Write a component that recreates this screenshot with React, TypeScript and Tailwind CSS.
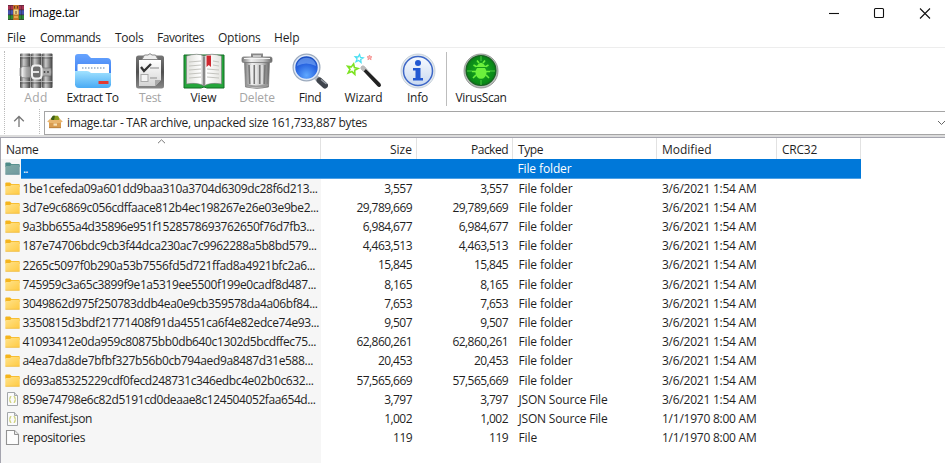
import { useLayoutEffect, useRef, useState, type ReactNode } from "react";

/* Text whose tracking is computed so that it fills the given advance width. */
function Fit({ w, children }: { w: number; children: string }) {
  const ref = useRef<HTMLSpanElement>(null);
  const [spacing, setSpacing] = useState(0);
  useLayoutEffect(() => {
    const el = ref.current;
    if (!el) return;
    el.style.letterSpacing = "0px";
    setSpacing((w - el.getBoundingClientRect().width) / children.length);
    el.style.letterSpacing = "";
  }, [w, children]);
  return (
    <span ref={ref} className="inline-block whitespace-nowrap" style={{ letterSpacing: spacing + "px" }}>
      {children}
    </span>
  );
}

function AddIcon() {
  return (
    <svg width="34" height="36" viewBox="0 0 34 36">
      <defs>
        <linearGradient id="bk">
          <stop offset="0" stopColor="#4c4c4c" />
          <stop offset=".35" stopColor="#c9c9c9" />
          <stop offset=".6" stopColor="#999" />
          <stop offset="1" stopColor="#3c3c3c" />
        </linearGradient>
        <linearGradient id="strap">
          <stop offset="0" stopColor="#777" />
          <stop offset=".2" stopColor="#eee" />
          <stop offset=".6" stopColor="#aaa" />
          <stop offset="1" stopColor="#8a8a8a" />
        </linearGradient>
      </defs>
      {[1, 12, 23].map((x) => (
        <g key={x}>
          <rect x={x} y="0.500" width="10.500" height="34.500" rx="1" fill="url(#bk)" />
          <path d={`M${x} 5h10.500M${x} 30h10.500`} stroke="#444" strokeWidth="1.200" opacity=".6" />
          <path d={`M${x} 3.500h10.500M${x} 28.500h10.500`} stroke="#ddd" strokeWidth="1" opacity=".6" />
        </g>
      ))}
      <path d="M1 15Q4 12.500 8 13.500L12 14V24L7 25Q3 25 1 23Z" fill="url(#strap)" stroke="#777" strokeWidth=".6" />
      <path d="M22 15H32Q33 19 32 23H22Z" fill="#aaa" stroke="#666" strokeWidth=".6" />
      <rect x="13" y="12.500" width="9.500" height="13" rx="3" fill="#6e6e6e" stroke="#f0f0f0" strokeWidth="2" />
      <path d="M12 19h8" stroke="#f0f0f0" strokeWidth="1.800" />
      <circle cx="25.500" cy="19" r=".9" fill="#444" />
      <circle cx="29" cy="19" r=".9" fill="#444" />
    </svg>
  );
}

function AppIcon() {
  return (
    <svg width="16" height="15" viewBox="0 0 16 15">
      <rect width="16" height="5" y="0" fill="#a83252" />
      <rect width="16" height="5" y="5" fill="#4353ad" />
      <rect width="16" height="5" y="10" fill="#2e8a35" />
      <path d="M0 .4h16M0 4.800h16M0 9.800h16M0 14.600h16" stroke="#3b2430" strokeWidth=".8" opacity=".75" />
      <path d="M2.500 1v13M13.500 1v13" stroke="#222" strokeWidth="1" opacity=".35" />
      <rect x="5.200" width="5.600" height="15" fill="#c87525" />
      <rect x="5.600" y="4.500" width="4.800" height="5" fill="#ecd58d" />
      <path d="M6.500 1v2.500M9.500 1v2.500M8 6v3" stroke="#674024" strokeWidth="1" />
      <path d="M6 12h4" stroke="#e7a54b" strokeWidth="2" />
    </svg>
  );
}

function ExtractIcon() {
  return (
    <svg width="38" height="36" viewBox="0 0 38 36">
      <defs>
        <linearGradient id="fb" x2="0" y2="1"><stop stopColor="#67a4ff" /><stop offset="1" stopColor="#276be8" /></linearGradient>
        <linearGradient id="ff" x2="0" y2="1"><stop stopColor="#a2e2ff" /><stop offset="1" stopColor="#48aaf4" /></linearGradient>
      </defs>
      <path d="M1 32V4Q1 1 4 1H12Q14 1 15 3L17 5H33Q37 5 37 9V32Z" fill="url(#fb)" />
      <rect x="3.500" y="11" width="31.500" height="18" rx="1" fill="#fff" />
      <path d="M8 15h24" stroke="#96abc2" strokeWidth="1.500" strokeDasharray="1.500 1.500" />
      <path d="M1 18H13Q15 18 17 20H37V31Q37 35 33 35H5Q1 35 1 31Z" fill="url(#ff)" />
      <rect x="24.500" y="28" width="10" height="3" rx=".5" fill="#e23a32" />
    </svg>
  );
}

function TestIcon() {
  return (
    <svg width="30" height="36" viewBox="0 0 30 36">
      <defs>
        <linearGradient id="cp" x2="0" y2="1"><stop stopColor="#777" /><stop offset=".5" stopColor="#505050" /><stop offset="1" stopColor="#888" /></linearGradient>
        <linearGradient id="paper" x2="0" y2="1"><stop stopColor="#fff" /><stop offset="1" stopColor="#d5d5d5" /></linearGradient>
      </defs>
      <rect x="1" y="2.500" width="28" height="33" rx="2.500" fill="url(#cp)" />
      <path d="M4 7H26V27L20 33H4Z" fill="url(#paper)" />
      <path d="M20 33V27H26Z" fill="#aaa" />
      <path d="M7 6.500L9.500 2H13Q15-.7 17 2h3.500L23 6.500Z" fill="#eee" stroke="#888" />
      <path d="M15 15h9M15 25h7" stroke="#aaa" strokeWidth="1.500" />
      <path d="M6 14l3 4 7-7" fill="none" stroke="#333" strokeWidth="2.300" />
      <rect x="6" y="21.500" width="7" height="7" fill="#f4f4f4" stroke="#aaa" />
    </svg>
  );
}

function ViewIcon() {
  return (
    <svg width="42" height="36" viewBox="0 0 42 36">
      <defs><linearGradient id="pg"><stop stopColor="#deded9" /><stop offset=".4" stopColor="#fff" /><stop offset=".5" stopColor="#999" /><stop offset=".57" stopColor="#fff" /><stop offset="1" stopColor="#e3e3de" /></linearGradient></defs>
      <path d="M1 2H41V35H24Q21 33 18 35H1Z" fill="#24a63b" stroke="#126d25" />
      <path d="M3.500 3Q15-.5 21 3Q28-.5 38.500 3V31Q27 29 21 33Q15 29 3.500 31Z" fill="url(#pg)" stroke="#777" strokeWidth=".6" />
      <path d="M21 4v28" stroke="#666" />
      <path d="M6 9l12-1M6 13l12-1M6 17l12-1M6 21l12-1M6 25l12-1M24 16l12 1M24 20l12 1M24 24l12 1M30 8l6 1M30 12l6 1" stroke="#c4c4bf" strokeWidth="1" />
      <path d="M23.500 2.500H28V14L25.750 12 23.500 14Z" fill="#ce2830" />
    </svg>
  );
}

function DeleteIcon() {
  return (
    <svg width="32" height="36" viewBox="0 0 32 36">
      <defs><linearGradient id="bin"><stop stopColor="#777" /><stop offset=".3" stopColor="#f0f0f0" /><stop offset=".7" stopColor="#c6c6c6" /><stop offset="1" stopColor="#666" /></linearGradient></defs>
      <path d="M11 4V1.500H21V4" fill="none" stroke="#888" strokeWidth="2" />
      <path d="M3.500 9H28.500L27.500 34Q16 37 4.500 34Z" fill="url(#bin)" stroke="#777" strokeWidth=".7" />
      <path d="M8 12l.7 19M13.300 12v19M18.700 12v19M24 12l-.7 19" stroke="#777" strokeWidth="1.600" />
      <path d="M10 12l.7 19M15 12v19M21 12v19" stroke="#eee" strokeWidth="1.100" />
      <rect x="1" y="4" width="30" height="5.500" rx="1.500" fill="url(#bin)" stroke="#777" strokeWidth=".8" />
      <path d="M3 5.500h26" stroke="#f5f5f5" />
      <path d="M5 32q11 3 22 0" fill="none" stroke="#999" strokeWidth="2" />
    </svg>
  );
}

function FindIcon() {
  return (
    <svg width="36" height="36" viewBox="0 0 36 36">
      <defs><radialGradient id="lens" cx=".5" cy=".8" r=".8"><stop stopColor="#5fa8ff" /><stop offset=".55" stopColor="#2864e0" /><stop offset="1" stopColor="#1646b5" /></radialGradient></defs>
      <path d="M24 24.500L28 28" stroke="#b5bac2" strokeWidth="5" />
      <path d="M27.500 27.500L33 32.500" stroke="#3f444c" strokeWidth="6" strokeLinecap="round" />
      <path d="M29 26.500L34.500 31" stroke="#9ba1a9" strokeWidth="1.300" />
      <circle cx="14.500" cy="14.500" r="13" fill="url(#lens)" stroke="#9caabd" strokeWidth="2" />
      <circle cx="14.500" cy="14.500" r="12" fill="none" stroke="#dfe9f8" strokeWidth="1.600" />
      <path d="M5 13C6 2 23 2 24 13Q14 8 5 13Z" fill="#8ebcff" opacity=".5" />
    </svg>
  );
}

const STAR = "M0-5L1.500-1.700 5-1.500 2.300.8 3.200 4.500 0 2.500-3.200 4.500-2.300.8-5-1.500-1.500-1.700Z";

function WizardIcon() {
  return (
    <svg width="36" height="36" viewBox="0 0 36 36">
      <path d="M17 15L33 32" stroke="#222" strokeWidth="4" strokeLinecap="round" />
      <path d="M17.500 13.500L34.500 30.500" stroke="#999" strokeWidth="1" />
      <path d="M15.500 13.500l3.500 3.500" stroke="#bbb" strokeWidth="4" />
      <g fill="#fff" strokeWidth="1.600">
        <path d={STAR} transform="translate(6.500 16) rotate(12) scale(1.050)" stroke="#7de323" />
        <path d={STAR} transform="translate(13 5.500) rotate(8) scale(.8)" stroke="#4bdff2" />
        <path d={STAR} transform="translate(23.500 4.500) scale(.5)" fill="#ffb0ad" stroke="#f48a89" />
      </g>
    </svg>
  );
}

function InfoIcon() {
  return (
    <svg width="36" height="36" viewBox="0 0 36 36">
      <defs><linearGradient id="inf" x2="0" y2="1"><stop stopColor="#f8fbff" /><stop offset="1" stopColor="#c9d9f0" /></linearGradient></defs>
      <circle cx="18" cy="18" r="17" fill="#e3e9ef" stroke="#b9c5d0" strokeWidth=".7" />
      <circle cx="18" cy="18" r="14.500" fill="url(#inf)" stroke="#3d67c7" strokeWidth="1.500" />
      <circle cx="18" cy="10" r="3" fill="#2359d2" />
      <path d="M13 15H20.500V25H23V27.500H13V25H15.500V17.500H13Z" fill="#2359d2" />
    </svg>
  );
}

function VirusIcon() {
  return (
    <svg width="36" height="36" viewBox="0 0 36 36">
      <defs><radialGradient id="vir"><stop stopColor="#1cae20" /><stop offset="1" stopColor="#078416" /></radialGradient></defs>
      <circle cx="18" cy="18" r="17" fill="#b9bebb" stroke="#858985" strokeWidth=".8" />
      <circle cx="18" cy="17.500" r="14.800" fill="url(#vir)" stroke="#176520" strokeWidth="1.500" />
      <path d="M18 3v5M18 27v5M4 18h5M27 18h5" stroke="#62e14c" opacity=".8" />
      <g stroke="#6cf03c" strokeWidth="1.600" fill="none">
        <path d="M14 14l-3.500-2M22 14l3.500-2M13 18.500H9M23 18.500h4M13 22l-3 3M23 22l3 3M16 10l-2-2.500M20 10l2-2.500" />
      </g>
      <ellipse cx="18" cy="19.500" rx="5.500" ry="6.300" fill="#6cf03c" />
      <path d="M14 12.500Q18 7 22 12.500V14H14Z" fill="#6cf03c" />
      <path d="M13 14.500h10" stroke="#149a1a" strokeWidth="1" />
    </svg>
  );
}

function FolderIcon({ selected }: { selected?: boolean }) {
  return (
    <svg className="shrink-0" width="15" height="13" viewBox="0 0 15 13">
      <defs>
        <linearGradient id="fo" x2="1" y2="1"><stop stopColor="#ffe38c" /><stop offset="1" stopColor="#ffca42" /></linearGradient>
        <linearGradient id="fs" x2="1" y2="1"><stop stopColor="#80aaa4" /><stop offset="1" stopColor="#7099a0" /></linearGradient>
      </defs>
      <path d="M.3 1.300Q.3.500 1.300.500H5L6.500 2H13.700Q14.700 2 14.700 3V5H.3Z" fill={selected ? "#4e8b88" : "#f5b51d"} />
      <path d="M.3 4H5L6.500 2.700H14.700V12Q14.700 12.500 14.200 12.500H.8Q.3 12.500.3 12Z" fill={selected ? "url(#fs)" : "url(#fo)"} />
      <path d="M.5 12.300H14.500" stroke={selected ? "#608d93" : "#edb73c"} strokeWidth=".7" />
    </svg>
  );
}

function FileIcon({ json }: { json?: boolean }) {
  return json ? (
    <svg className="shrink-0" width="15" height="16" viewBox="0 0 15 16">
      <path d="M2.500 1.500H9.500L12.500 4.500V14.500H2.500Z" fill="#fbfbfb" stroke="#a3a7ab" />
      <path d="M9.500 1.500V4.500H12.500" fill="#ddd" stroke="#a3a7ab" />
      <path d="M6.300 5.500Q5 5.500 5 7Q5 8.500 4.300 8.500Q5 8.500 5 10Q5 11.500 6.300 11.500M8.700 5.500Q10 5.500 10 7Q10 8.500 10.700 8.500Q10 8.500 10 10Q10 11.500 8.700 11.500" fill="none" stroke="#c4c760" strokeWidth="1.200" />
    </svg>
  ) : (
    <svg className="shrink-0" width="15" height="17" viewBox="0 0 15 17">
      <path d="M1.500 1.500H9.500L13.500 5.500V15.500H1.500Z" fill="#fdfdfd" stroke="#929292" strokeWidth="1.100" />
      <path d="M9.500 1.500V5.500H13.500" fill="#e8e8e8" stroke="#929292" />
    </svg>
  );
}

function BoxIcon() {
  return (
    <svg width="16" height="14" viewBox="0 0 16 14">
      <path d="M2 6H14V13H2Z" fill="#d99c50" />
      <path d="M3.500 3.500H12.500L15.800 6.500L13 8H3L.2 6.500Z" fill="#e9b56e" />
      <path d="M4 3.500L6 .8H11L12.500 3.500L12 5H4.500Z" fill="#8a9c1c" />
      <path d="M4 3.500L6 .8H8L7 5H4.500Z" fill="#3d5c1c" />
      <path d="M6.500 8.500h3.500v2.200H6.500Z" fill="#f7e2b8" />
      <path d="M2 12.700h12" stroke="#b37938" strokeWidth=".8" />
    </svg>
  );
}

function Tool({ className, label, w, disabled, children }: { className: string; label: string; w: number; disabled?: boolean; children: ReactNode }) {
  return (
    <div className={"flex shrink-0 flex-col items-center " + className}>
      <div className="flex h-[38px] items-center justify-center">{children}</div>
      <div className={"h-4 leading-4 " + (disabled ? "text-[#a5a5a5]" : "text-[#1c1c1c]")}>
        <Fit w={w}>{label}</Fit>
      </div>
    </div>
  );
}

type Row = { name: string; nw: number; size: string; type: string; date: string };
const D = "3/6/2021 1:54 AM";
const E = "1/1/1970 8:00 AM";
const F = "File folder";
const rows: Row[] = [
  { name: "1be1cefeda09a601dd9baa310a3704d6309dc28f6d213...", nw: 295, size: "3,557", type: F, date: D },
  { name: "3d7e9c6869c056cdffaace812b4ec198267e26e03e9be2...", nw: 296, size: "29,789,669", type: F, date: D },
  { name: "9a3bb655a4d35896e951f1528578693762650f76d7fb3...", nw: 292, size: "6,984,677", type: F, date: D },
  { name: "187e74706bdc9cb3f44dca230ac7c9962288a5b8bd579...", nw: 294, size: "4,463,513", type: F, date: D },
  { name: "2265c5097f0b290a53b7556fd5d721ffad8a4921bfc2a6...", nw: 292.5, size: "15,845", type: F, date: D },
  { name: "745959c3a65c3899f9e1a5319ee5500f199e0cadf8d487...", nw: 293.5, size: "8,165", type: F, date: D },
  { name: "3049862d975f250783ddb4ea0e9cb359578da4a06bf84...", nw: 295, size: "7,653", type: F, date: D },
  { name: "3350815d3bdf21771408f91da4551ca6f4e82edce74e93...", nw: 296.5, size: "9,507", type: F, date: D },
  { name: "41093412e0da959c80875bb0db640c1302d5bcdffec75...", nw: 293.5, size: "62,860,261", type: F, date: D },
  { name: "a4ea7da8de7bfbf327b56b0cb794aed9a8487d31e588...", nw: 290.5, size: "20,453", type: F, date: D },
  { name: "d693a85325229cdf0fecd248731c346edbc4e02b0c632...", nw: 291, size: "57,565,669", type: F, date: D },
  { name: "859e74798e6c82d5191cd0deaae8c124504052faa654d...", nw: 293, size: "3,797", type: "JSON Source File", date: D },
  { name: "manifest.json", nw: 69.5, size: "1,002", type: "JSON Source File", date: E },
  { name: "repositories", nw: 62.5, size: "119", type: "File", date: E },
];

const typeWidth: Record<string, number> = { [F]: 54, "JSON Source File": 89, File: 18.5 };

/* Digits and commas have fixed advances in the size columns. */
function numWidth(s: string) {
  const commas = s.split(",").length - 1;
  return (s.length - commas) * 6.3 + commas * 2.6;
}

const menu: [string, number, string][] = [
  ["File", 18.5, "w-[33px]"],
  ["Commands", 60.5, "w-[75px]"],
  ["Tools", 28.5, "w-[42px]"],
  ["Favorites", 47, "w-[61px]"],
  ["Options", 42.5, "w-[56px]"],
  ["Help", 25.5, "w-[40px]"],
];

export default function App() {
  return (
    <div className="flex h-[463px] w-[945px] flex-col overflow-hidden bg-white font-['Open_Sans','Noto_Sans',sans-serif] text-[12px] text-[#1f1f1f]">
      <div className="flex h-[27px] shrink-0 items-center pl-2 text-black">
        <div className="mb-[2px]"><AppIcon /></div>
        <div className="ml-[5px] flex-1 pb-px leading-4"><Fit w={50.5}>image.tar</Fit></div>
        <svg className="mb-[2px] mr-[13px]" width="104" height="14" viewBox="0 0 104 14" fill="none" stroke="#111" strokeWidth="1.100">
          <path d="M1 7.500H11" />
          <rect x="46.500" y="2.500" width="9" height="9" rx="1" />
          <path d="M92 2.500L102 12.500M102 2.500L92 12.500" />
        </svg>
      </div>
      <div className="flex h-[20px] shrink-0 items-center pl-[7px] leading-[20px]">
        {menu.map(([t, w, c]) => (
          <div key={t} className={"pt-[2px] " + c}><Fit w={w}>{t}</Fit></div>
        ))}
      </div>
      <div className="flex h-[62px] shrink-0 border-t border-[#ededed] pt-1">
        <div className="-mt-px ml-1 mr-[3px] h-[58px] border-l border-dotted border-[#bcbcbc]" />
        <Tool className="w-[56px]" label="Add" w={23.5} disabled><AddIcon /></Tool>
        <Tool className="w-[57px]" label="Extract To" w={52}><ExtractIcon /></Tool>
        <Tool className="w-[58px]" label="Test" w={22} disabled><TestIcon /></Tool>
        <Tool className="w-[49px]" label="View" w={26}><ViewIcon /></Tool>
        <Tool className="w-[58px]" label="Delete" w={35.5} disabled><DeleteIcon /></Tool>
        <Tool className="w-[48px]" label="Find" w={22.5}><FindIcon /></Tool>
        <Tool className="w-[59px]" label="Wizard" w={38}><WizardIcon /></Tool>
        <Tool className="w-[49px]" label="Info" w={21}><InfoIcon /></Tool>
        <div className="ml-1 mr-px h-[54px] w-px bg-[#bdbdbd]" />
        <Tool className="w-[66px]" label="VirusScan" w={51}><VirusIcon /></Tool>
      </div>
      <div className="flex h-[28px] shrink-0 border-b-2 border-[#dcdcdc] bg-white">
        <div className="ml-1 h-[25px] border-l border-dotted border-[#bcbcbc]" />
        <div className="flex w-[34px] items-center pb-[2px] pl-2">
          <svg width="12" height="13" viewBox="0 0 12 13" fill="none" stroke="#777" strokeWidth="1.300">
            <path d="M6 12V1.500M1.200 6.300L6 1.500L10.800 6.300" />
          </svg>
        </div>
        <div className="mr-1 h-[25px] border-l border-dotted border-[#bcbcbc]" />
        <div className="mt-[2px] flex h-6 flex-1 items-center border border-r-0 border-[#a5a5a5] pl-[2px]">
          <div className="mb-[2px]"><BoxIcon /></div>
          <div className="ml-[4px] flex-1 pb-px"><Fit w={300}>image.tar - TAR archive, unpacked size 161,733,887 bytes</Fit></div>
          <svg className="shrink-0" width="8" height="6" viewBox="0 0 8 6" fill="none" stroke="#666"><path d="M1 1L4.500 4.500L8 1" /></svg>
        </div>
      </div>
      <div className="relative flex h-[326px] shrink-0 flex-col border-l border-t border-[#a5a5af]">
        <svg className="absolute left-[156px] top-[1px]" width="9" height="5" viewBox="0 0 9 5" fill="none" stroke="#777"><path d="M1 4.200L4.500.8L8 4.200" /></svg>
        <div className="flex h-[21px] shrink-0 leading-[23px]">
          <div className="w-[320px] border-r border-[#e2e2e2] pl-[5px]"><Fit w={32.5}>Name</Fit></div>
          <div className="w-[96px] border-r border-[#e2e2e2] pr-1 text-right"><Fit w={22}>Size</Fit></div>
          <div className="w-[96px] border-r border-[#e2e2e2] pr-1 text-right"><Fit w={37}>Packed</Fit></div>
          <div className="w-[144px] border-r border-[#e2e2e2] pl-[5px]"><Fit w={25}>Type</Fit></div>
          <div className="w-[120px] border-r border-[#e2e2e2] pl-[5px]"><Fit w={49.5}>Modified</Fit></div>
          <div className="w-[84px] border-r border-[#e2e2e2] pl-[5px]"><Fit w={35}>CRC32</Fit></div>
        </div>
        <div className="flex h-[19.700px] shrink-0 items-center leading-[19px] text-white">
          <div className="flex w-5 items-center self-stretch bg-[#f6f6f6] pl-1"><FolderIcon selected /></div>
          <div className="flex h-[19.700px] w-[840px] border-b border-[#4ea1e6] bg-[#0078d9]">
            <div className="w-[496.500px] pl-[2px]"><Fit w={4.5}>..</Fit></div>
            <Fit w={54}>{F}</Fit>
          </div>
        </div>
        {rows.map((r) => (
          <div key={r.name} className="flex h-[19.200px] shrink-0 leading-[19px]">
            <div className="flex w-[320px] items-center bg-[#f6f6f6] pl-1">
              {r.type === F ? <FolderIcon /> : <FileIcon json={r.type !== "File"} />}
              <div className="ml-[2.500px]"><Fit w={r.nw}>{r.name}</Fit></div>
            </div>
            <div className="w-[96px] pr-[5px] text-right"><Fit w={numWidth(r.size)}>{r.size}</Fit></div>
            <div className="w-[96px] pr-[5px] text-right"><Fit w={numWidth(r.size)}>{r.size}</Fit></div>
            <div className="w-[144px] pl-[5.500px]"><Fit w={typeWidth[r.type]}>{r.type}</Fit></div>
            <div className="pl-[5px]"><Fit w={94.5}>{r.date}</Fit></div>
          </div>
        ))}
        <div className="w-[320px] flex-1 bg-[#f6f6f6]" />
      </div>
    </div>
  );
}
